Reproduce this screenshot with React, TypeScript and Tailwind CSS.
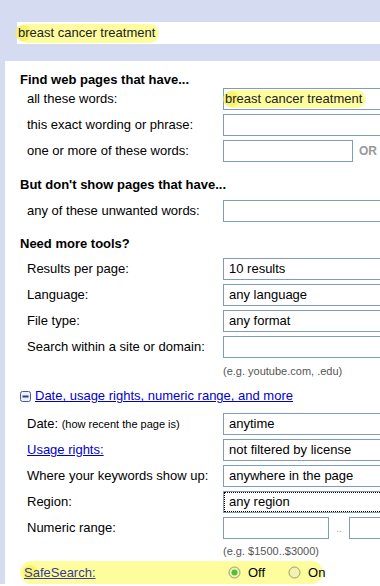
import React from 'react';

const FONT = { fontFamily: '"Liberation Sans", Arial, sans-serif' };

const Highlight = ({ children, className = '' }: { children: React.ReactNode; className?: string }) => (
  <span className={`relative inline-flex items-center rounded-full bg-[#fdfd9e] ${className}`}>
    <span className="absolute left-[-2px] top-1/2 h-[16px] w-[16px] -translate-y-1/2 rounded-full bg-[#f3ef5c]/70" />
    <span className="relative">{children}</span>
  </span>
);

const Box = ({ children, className = 'w-[200px]', focus = false }: { children?: React.ReactNode; className?: string; focus?: boolean }) => (
  <div
    className={`flex h-[22px] shrink-0 items-center border border-[#7f9db9] bg-white pl-[5px] ${className} ${
      focus ? 'outline-1 outline-dotted outline-black -outline-offset-2' : ''
    }`}
  >
    {children}
  </div>
);

const Row = ({ label, children }: { label: React.ReactNode; children: React.ReactNode }) => (
  <div className="flex h-[26px] items-center pl-[7px]">
    <div className="w-[196px] shrink-0">{label}</div>
    {children}
  </div>
);

const Heading = ({ children, className = '' }: { children: React.ReactNode; className?: string }) => (
  <div className={`h-[13px] text-[13px] font-bold leading-[13px] ${className}`}>{children}</div>
);

const Hint = ({ children, className = '' }: { children: React.ReactNode; className?: string }) => (
  <div className={`h-[14px] pl-[203px] text-[11px] leading-[14px] text-[#555] ${className}`}>{children}</div>
);

const Radio = ({ checked }: { checked?: boolean }) => (
  <svg width="13" height="13" viewBox="0 0 13 13">
    <circle cx="6.5" cy="6.5" r="5.5" fill="#f4f2b0" stroke="#9a9a70" strokeWidth="1" />
    {checked && <circle cx="6.5" cy="6.5" r="3" fill="#4cc23a" />}
  </svg>
);

const MinusIcon = () => (
  <svg width="11" height="11" viewBox="0 0 11 11">
    <rect x="0.5" y="0.5" width="10" height="10" rx="2" fill="#eef0f8" stroke="#4a5a8c" />
    <rect x="2.5" y="4.5" width="6" height="2" fill="#2a3aa0" />
  </svg>
);

export default function App() {
  return (
    <div className="h-[586px] w-[380px] overflow-hidden bg-white text-[13px] text-black" style={FONT}>
      {/* search bar */}
      <div className="h-[61px] bg-[#d5dbf0] pl-[17px] pt-[22px]">
        <div className="flex h-[22px] w-[400px] items-center bg-white">
          <Highlight className="h-[19px] pr-[4px] pl-[1px] text-[13px] text-[#222]">breast cancer treatment</Highlight>
        </div>
      </div>

      <div className="border-l-[5px] border-[#d5dbf0] pl-[15px] pt-[12px]">
        <Heading>Find web pages that have...</Heading>
        <Row label="all these words:">
          <Box className="w-[200px] !pl-[1px]">
            <Highlight className="h-[18px] pr-[4px] text-[#222]">breast cancer treatment</Highlight>
          </Box>
        </Row>
        <Row label="this exact wording or phrase:">
          <Box />
        </Row>
        <Row label="one or more of these words:">
          <Box className="w-[130px]" />
          <span className="ml-[6px] shrink-0 text-[12px] font-bold text-[#999]">OR</span>
        </Row>

        <Heading className="mt-[14px] mb-[7px]">But don&apos;t show pages that have...</Heading>
        <Row label="any of these unwanted words:">
          <Box />
        </Row>

        <Heading className="mt-[13px] mb-[6px]">Need more tools?</Heading>
        <Row label="Results per page:">
          <Box>10 results</Box>
        </Row>
        <Row label="Language:">
          <Box>any language</Box>
        </Row>
        <Row label="File type:">
          <Box>any format</Box>
        </Row>
        <Row label="Search within a site or domain:">
          <Box />
        </Row>
        <Hint className="mt-[4px]">(e.g. youtube.com, .edu)</Hint>

        <div className="mt-[10px] flex h-[16px] items-center gap-[4px]">
          <MinusIcon />
          <a className="text-[#0000cc] underline">Date, usage rights, numeric range, and more</a>
        </div>

        <div className="mt-[7px]">
          <Row
            label={
              <span>
                Date: <span className="text-[11px]">(how recent the page is)</span>
              </span>
            }
          >
            <Box>anytime</Box>
          </Row>
          <Row label={<a className="text-[#0000cc] underline">Usage rights:</a>}>
            <Box>not filtered by license</Box>
          </Row>
          <Row label="Where your keywords show up:">
            <Box>anywhere in the page</Box>
          </Row>
          <Row label="Region:">
            <Box focus>any region</Box>
          </Row>
          <Row label="Numeric range:">
            <Box className="w-[106px]" />
            <span className="w-[20px] shrink-0 text-center text-[10px] text-[#999]">..</span>
            <Box className="w-[60px]" />
          </Row>
        </div>
        <Hint className="mt-[3px]">(e.g. $1500..$3000)</Hint>

        <div className="relative mt-[3px] flex h-[23px] w-[303px] items-center rounded-full bg-[#fdfd9e] pl-[4px]">
          <span className="absolute left-[3px] top-[4px] h-[15px] w-[15px] rounded-full bg-[#f3ef5c]/70" />
          <div className="relative w-[204px] shrink-0">
            <a className="text-[#3b3b8f] underline">SafeSearch:</a>
          </div>
          <div className="relative flex items-center gap-[7px]">
            <Radio checked />
            <span>Off</span>
          </div>
          <div className="relative ml-[23px] flex items-center gap-[7px]">
            <Radio />
            <span>On</span>
          </div>
        </div>
      </div>
    </div>
  );
}
